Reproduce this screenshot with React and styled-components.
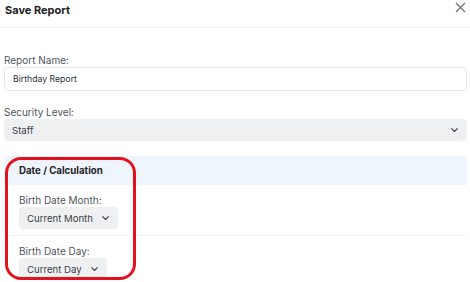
import React from 'react'
import styled, { createGlobalStyle } from 'styled-components'

const GlobalStyle = createGlobalStyle`
  html, body {
    margin: 0;
    padding: 0;
    background: #fff;
  }
  body {
    font-family: 'Inter', 'Liberation Sans', sans-serif;
    color: #1f2430;
  }
`

const Chevron = ({ size = 7 }) => (
  <svg width={size} height={size * 0.6} viewBox='0 0 10 6' fill='none'>
    <path
      d='M1 1l4 4 4-4'
      stroke='#3f444d'
      strokeWidth='1.6'
      strokeLinecap='round'
      strokeLinejoin='round'
    />
  </svg>
)

const App = () => {
  return (
    <Page>
      <GlobalStyle />
      <Header>
        <Title>Save Report</Title>
        <CloseBtn aria-label='Close'>
          <svg width='11' height='11' viewBox='0 0 11 11'>
            <path d='M1 1l9 9M10 1l-9 9' stroke='#6b6f76' strokeWidth='1.2' />
          </svg>
        </CloseBtn>
      </Header>
      <Body>
        <Field>
          <Label>Report Name:</Label>
          <TextInput defaultValue='Birthday Report' />
        </Field>
        <Field>
          <Label>Security Level:</Label>
          <WideSelect>
            <span>Staff</span>
            <Chevron />
          </WideSelect>
        </Field>
        <Section>
          <SectionHead>Date / Calculation</SectionHead>
          <SectionRow>
            <Label>Birth Date Month:</Label>
            <PillSelect>
              <span>Current Month</span>
              <Chevron />
            </PillSelect>
          </SectionRow>
          <SectionRow last>
            <Label>Birth Date Day:</Label>
            <PillSelect>
              <span>Current Day</span>
              <Chevron />
            </PillSelect>
          </SectionRow>
        </Section>
      </Body>
      <Highlight />
    </Page>
  )
}

const Page = styled.div`
  position: relative;
  width: 470px;
  height: 282px;
  overflow: hidden;
`

const Header = styled.div`
  height: 27px;
  display: flex;
  align-items: flex-start;
  justify-content: space-between;
  padding: 0 4px 0 5px;
  border-bottom: 1px solid #f3f4f6;
`

const Title = styled.h2`
  margin: 0;
  font-size: 11px;
  line-height: 20px;
  font-weight: 700;
  color: #1a1d23;
`

const CloseBtn = styled.button`
  border: none;
  background: none;
  padding: 0;
  margin-top: 2px;
  width: 11px;
  height: 11px;
  display: flex;
  cursor: pointer;
`

const Body = styled.div`
  padding: 26px 3px 0 4px;
  display: flex;
  flex-direction: column;
`

const Field = styled.div`
  display: flex;
  flex-direction: column;
  margin-bottom: 15px;
`

const Label = styled.label`
  font-size: 10px;
  line-height: 12px;
  color: #50555e;
  margin-bottom: 1px;
`

const TextInput = styled.input`
  height: 24px;
  box-sizing: border-box;
  border: 1px solid #e6e8eb;
  border-radius: 4px;
  padding: 0 8px;
  font-family: inherit;
  font-size: 8.7px;
  color: #2b2f36;
  outline: none;
`

const WideSelect = styled.div`
  height: 22px;
  box-sizing: border-box;
  background: #eff0f2;
  border-radius: 4px;
  padding: 0 9px 0 8px;
  display: flex;
  align-items: center;
  justify-content: space-between;
  font-size: 9.6px;
  color: #3a3e45;
`

const Section = styled.div`
  display: flex;
  flex-direction: column;
`

const SectionHead = styled.div`
  height: 29px;
  background: #eef5fd;
  display: flex;
  align-items: center;
  padding-left: 15px;
  font-size: 9.7px;
  font-weight: 700;
  color: #1f232a;
`

const SectionRow = styled.div`
  display: flex;
  flex-direction: column;
  align-items: flex-start;
  padding: 9px 15px 6px;
  border-bottom: ${p => (p.last ? 'none' : '1px solid #f3f4f6')};
`

const PillSelect = styled.div`
  height: 22px;
  box-sizing: border-box;
  background: #eff0f2;
  border-radius: 4px;
  padding: 0 9px 0 8px;
  display: flex;
  align-items: center;
  gap: 9px;
  font-size: 9.6px;
  color: #3a3e45;
`

const Highlight = styled.div`
  position: absolute;
  left: 5px;
  top: 157px;
  width: 131px;
  height: 123px;
  box-sizing: border-box;
  border: 3px solid #e3121b;
  border-radius: 16px;
  pointer-events: none;
`

export default App
